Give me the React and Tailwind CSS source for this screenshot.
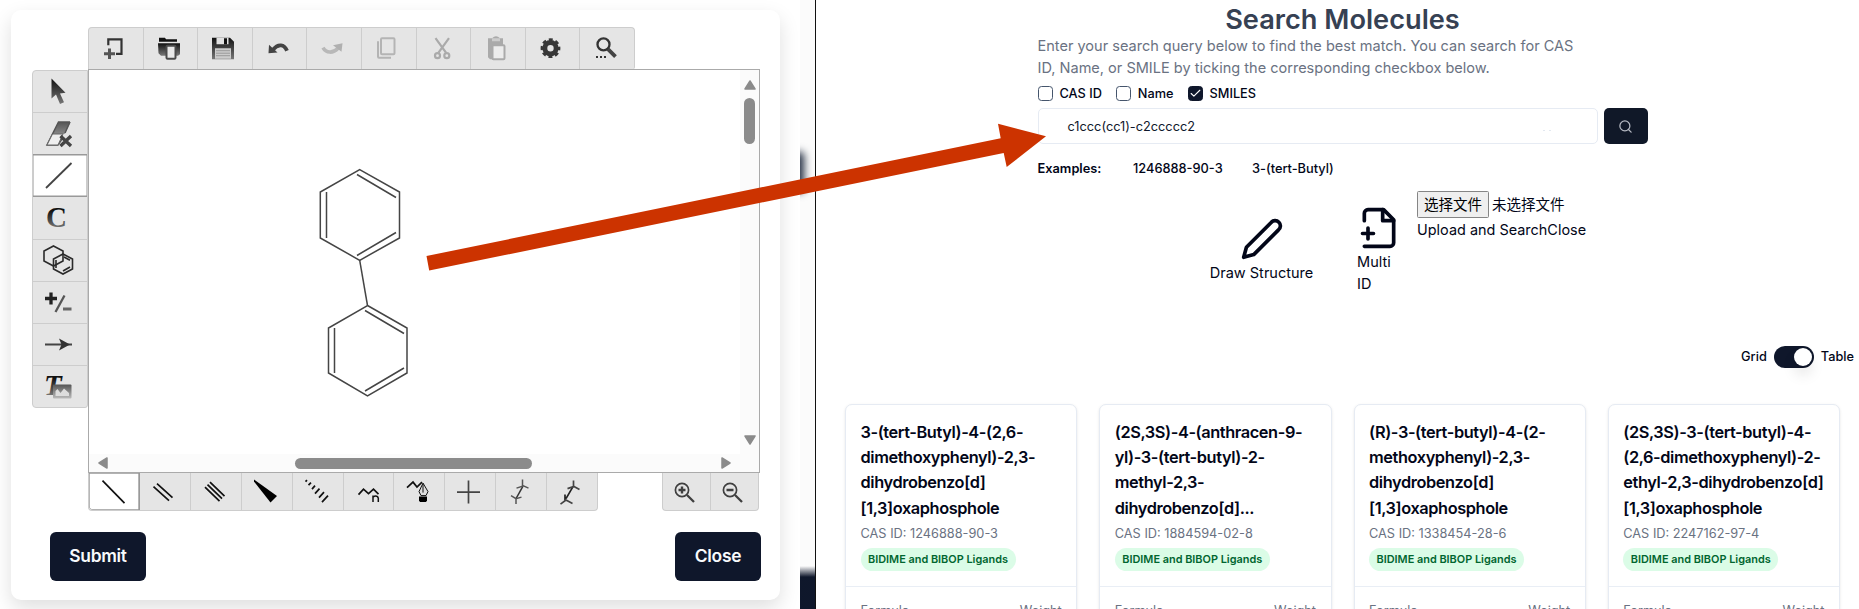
import React from "react";

const cards = [
  { lines: ["3-(tert-Butyl)-4-(2,6-", "dimethoxyphenyl)-2,3-", "dihydrobenzo[d]", "[1,3]oxaphosphole"], cas: "1246888-90-3" },
  { lines: ["(2S,3S)-4-(anthracen-9-", "yl)-3-(tert-butyl)-2-", "methyl-2,3-", "dihydrobenzo[d]..."], cas: "1884594-02-8" },
  { lines: ["(R)-3-(tert-butyl)-4-(2-", "methoxyphenyl)-2,3-", "dihydrobenzo[d]", "[1,3]oxaphosphole"], cas: "1338454-28-6" },
  { lines: ["(2S,3S)-3-(tert-butyl)-4-", "(2,6-dimethoxyphenyl)-2-", "ethyl-2,3-dihydrobenzo[d]", "[1,3]oxaphosphole"], cas: "2247162-97-4" },
];

const topIcons = [
  // new
  <g fill="none">
    <path d="M20.3 18V12.2H33.5V26.6H28" stroke="#333" strokeWidth="2.2" />
    <path d="M16 26.5H27M21.5 21.2V31.8" stroke="#555" strokeWidth="3" />
  </g>,
  // open
  <g>
    <path d="M16 10.5h6l1 1.5h11v2.5H16z" fill="#111" />
    <path d="M15 16h22v11l-2 1.5H18l-2.500-2.500z" fill="url(#dark)" />
    <rect x="23.500" y="18.500" width="9" height="13" rx="1" fill="#e8e8e8" stroke="#4a4a4a" strokeWidth="2" />
  </g>,
  // save
  <g>
    <path d="M15 10.500h18l4 4V32H15z" fill="url(#dark)" />
    <path d="M19.500 10.500h12v6.500h-12z" fill="#e2e2e2" />
    <path d="M27 11h3v6h-3z" fill="#111" />
    <path d="M18 21h16v10.500H18z" fill="#ccc" />
    <path d="M19 23.500h14M19 26h14M19 28.500h14" stroke="#999" />
  </g>,
  // undo
  <g>
    <path d="M21 22.500C26 16 32.500 17 35 23.500" fill="none" stroke="#444" strokeWidth="3.800" />
    <path d="M17 17.500L16.500 26l9-.8z" fill="#444" />
  </g>,
  // redo
  <g>
    <path d="M17 20.500C20 26 27 26.500 32 21" fill="none" stroke="#b8b8b8" strokeWidth="3.600" />
    <path d="M27 18l9.500-2-1 8.500z" fill="#b0b0b0" />
  </g>,
  // copy
  <g fill="none" stroke="#b4b4b4" strokeWidth="2">
    <rect x="20" y="11" width="13.500" height="16" rx="1" />
    <path d="M17 14v15.500q0 1 1 1h12" />
  </g>,
  // cut
  <g fill="none" stroke="#aaa" strokeWidth="2.200">
    <path d="M19.500 11L30 25.500M33 11L22.500 25.500" />
    <circle cx="21.500" cy="28.500" r="2.500" />
    <circle cx="30.800" cy="28.500" r="2.500" />
  </g>,
  // paste
  <g>
    <path d="M18 11h4q4-4 8 0h3v21H20l-2-2z" fill="#aaa" />
    <path d="M22 11h8v3h-8z" fill="#ccc" />
    <rect x="22.500" y="18" width="12" height="14" rx="1" fill="#ececec" stroke="#aaa" strokeWidth="2" />
  </g>,
  // settings
  <g>
    <circle cx="25.500" cy="21" r="5.700" fill="none" stroke="#383838" strokeWidth="5" />
    <circle cx="25.500" cy="21" r="8.600" fill="none" stroke="#383838" strokeWidth="2.600" strokeDasharray="3.900 2.854" strokeDashoffset="1.950" />
  </g>,
  // find
  <g fill="none" stroke="#333">
    <circle cx="24.500" cy="17.200" r="6" strokeWidth="2.300" />
    <path d="M29 22l7.500 7.500" stroke="#444" strokeWidth="3.800" />
    <path d="M17 29.800h10" strokeWidth="2" strokeDasharray="2 2" />
  </g>,
];

const leftIcons = [
  <path d="M19.500 8.500V28.500l4.500-4 4 9.500 4-1.800-4-8.700 5.500-.8z" fill="url(#dark)" />,
  <g>
    <path d="M26.500 10h12l-6 12H20.500z" fill="url(#eraser)" />
    <path d="M38 10H26.500L15 33h11l4-6M38 10l-5 11" fill="none" stroke="#555" strokeWidth="1.500" />
    <path d="M20.500 22L15 33h11l5-11z" fill="#efefef" stroke="#666" />
    <path d="M28.500 24l10.500 10M39 24L28.500 34" stroke="#444" strokeWidth="3.300" />
  </g>,
  <path d="M14 34L39.500 9" stroke="#444" strokeWidth="1.800" />,
  <text x="14" y="31" fontFamily="Liberation Serif, serif" fontSize="29" fontWeight="700" fill="url(#letter)">C</text>,
  <g fill="none" stroke="#2a2a2a" strokeWidth="1.600">
    <path d="M21.500 7l9.500 5v10l-9.500 5-9.500-5V12z" />
    <path d="M31 15l9.500 5v10L31 35l-9.500-5V20z" />
    <path d="M24 21v8M32 18l6 3.300M31 32l7-4" />
  </g>,
  <g fill="none">
    <path d="M13 17.500h12M19 11.500v12" stroke="#222" strokeWidth="3.300" />
    <path d="M23.500 31L32.500 14.500" stroke="#555" strokeWidth="2.300" />
    <path d="M31 28h8.500" stroke="#666" strokeWidth="3.200" />
  </g>,
  <g>
    <path d="M13 21.500h27" stroke="#444" strokeWidth="1.800" />
    <path d="M27 15.500l11 6-11 6 2.500-6z" fill="#333" />
  </g>,
  <g>
    <text x="12" y="29.500" fontFamily="Liberation Serif, serif" fontSize="29" fontStyle="italic" fontWeight="700" fill="url(#letter)">T</text>
    <rect x="21" y="19.500" width="18.500" height="14" rx="1" fill="url(#photo)" />
    <path d="M23.500 31v-5l2-2 3 4 3.500-4.500 5 4.500v3z" fill="#ddd" />
  </g>,
];

const bondIcons = [
  <path d="M13.500 8l22 22.500" stroke="#111" strokeWidth="1.700" />,
  <path d="M13.500 14l15.500 14M17 11l15.500 14" stroke="#111" strokeWidth="1.700" />,
  <path d="M14 14.500l14.500 14M16.500 12l14.500 14M19 9.500l14.500 14" stroke="#111" strokeWidth="1.700" />,
  <path d="M12 7l23 16.500-6.500 6.500L12 9z" fill="#000" />,
  <path d="M12.500 9l1.500-1.500M15.500 12.500l2.500-2.500M19 16.500l3-3.500M22 21l4.500-5M26 25l5-5.500M29 29.500l6-6.500" stroke="#111" strokeWidth="1.700" />,
  <g fill="none" stroke="#111" strokeWidth="1.700">
    <path d="M14.500 22l5-5.500 5 4.500 5-4.500 5 5" />
    <path d="M29 29.500V23M29 24.500q2.500-2 4.500-.5l.8 1.500v4" strokeWidth="1.500" />
  </g>,
  <g>
    <path d="M13 15l6-5.500 4 5 5-5" fill="none" stroke="#111" strokeWidth="1.700" />
    <path d="M29 10.500l-4 8.500 2 4h5l2-4z" fill="#ddd" stroke="#111" />
    <path d="M29 11v9" stroke="#111" />
    <path d="M25 24h8v4l-1 1.500h-6L25 28z" fill="#000" />
  </g>,
  <path d="M12 19.500h23M23.500 8v23" stroke="#444" strokeWidth="1.700" />,
  <g fill="none" stroke="#555" strokeWidth="1.500">
    <path d="M20 26l7-12.500" stroke="#333" />
    <path d="M15 23l5 3 5.500-1.500M20 26v5.500M26.500 7v6.500l-6 2M27 13l5.500 2.500" />
  </g>,
  <g fill="none" stroke="#444" strokeWidth="1.700">
    <path d="M18 28v-6M19 26l7-12" stroke="#222" />
    <path d="M13.500 31.500l5.500-4 6.500 3.500M26.500 8v6l-6 2M27 14l5.500 3" />
  </g>,
];

function Icon({ w, h, dx = 0, dy = 0, children }) {
  return (
    <svg width={w} height={h} viewBox={`${dx} ${dy} ${w} ${h}`} className="block shrink-0">
      {children}
    </svg>
  );
}

function Editor() {
  return (
    <div className="flex h-[590px] w-[769px] flex-col rounded-[10px] bg-white pt-[17px] pl-[21px] shadow-[0_8px_20px_rgba(0,0,0,0.13)]">
      <div className="ml-14 flex h-[42px] w-[547px] overflow-hidden rounded-t-[4px] rounded-br-[2px] border border-b-0 border-[#cdcdcd] bg-[#e5e5e5]">
        {topIcons.map((icon, i) => (
          <div key={i} className={"flex-1 overflow-hidden " + (i ? "border-l border-[#cdcdcd]" : "")}>
            <Icon w={54} h={43} dx={1} dy={0.8}>{icon}</Icon>
          </div>
        ))}
      </div>
      <div className="flex h-[404px]">
        <div className="mt-px flex h-[338px] w-14 flex-col overflow-hidden rounded-l-[4px] rounded-br-[3px] border border-[#cdcdcd] bg-[#e5e5e5]">
          {leftIcons.map((icon, i) => (
            <div
              key={i}
              className={
                "flex-1 overflow-hidden " +
                (i === 2 ? "border-t border-[#999] bg-white shadow-[inset_0_0_0_0.5px_#999]" : i === 0 ? "" : i === 3 ? "border-t border-[#999]" : "border-t border-[#cdcdcd]")
              }
            >
              <Icon w={54} h={42} dx={1} dy={1}>{icon}</Icon>
            </div>
          ))}
        </div>
        <div className="flex w-[672px] flex-col border border-[#aaa] bg-white">
          <div className="flex flex-1">
            <svg width="651" height="383" viewBox="89 70 651 383" fill="none" stroke="#454545" strokeWidth="1.500">
              <path d="M359.700 169.700L399.500 192V238L359.700 260.300L320.300 238V192Z" />
              <path d="M326.500 192V238M357 174.500L396 197.500M357 255.500L396 232.500" />
              <path d="M359.700 260.300L367.500 305.500" />
              <path d="M367.500 305.500L407 328V373L367.500 396L328.500 373V328Z" />
              <path d="M334.500 328V373M365 310.500L404 333.500M365 391L404 368" />
            </svg>
            <div className="flex flex-1 flex-col items-center bg-[#fbfbfb] pt-[10px] pb-[9px]">
              <svg width="12" height="10" viewBox="0 0 12 10"><path d="M6 1L11 9H1Z" fill="#8b8b8b" stroke="#8b8b8b" strokeWidth="1.500" strokeLinejoin="round" /></svg>
              <div className="mt-2 h-[46px] w-[11px] rounded-full bg-[#8b8b8b]" />
              <svg className="mt-auto" width="12" height="10" viewBox="0 0 12 10"><path d="M6 9L11 1H1Z" fill="#8b8b8b" stroke="#8b8b8b" strokeWidth="1.500" strokeLinejoin="round" /></svg>
            </div>
          </div>
          <div className="flex h-[18px] items-center bg-[#fbfbfb] pl-[9px]">
            <svg width="10" height="12" viewBox="0 0 10 12"><path d="M1 6L9 1V11Z" fill="#8b8b8b" stroke="#8b8b8b" strokeWidth="1.500" strokeLinejoin="round" /></svg>
            <div className="ml-[187px] h-[11px] w-[237px] rounded-full bg-[#8b8b8b]" />
            <svg className="ml-[189px]" width="10" height="12" viewBox="0 0 10 12"><path d="M9 6L1 1V11Z" fill="#8b8b8b" stroke="#8b8b8b" strokeWidth="1.500" strokeLinejoin="round" /></svg>
          </div>
        </div>
      </div>
      <div className="ml-14 flex h-[38px] w-[671px] justify-between">
        <div className="flex w-[510px] overflow-hidden rounded-b-[4px] border border-t-0 border-[#cdcdcd] bg-[#e5e5e5]">
          {bondIcons.map((icon, i) => (
            <div
              key={i}
              className={"flex-1 overflow-hidden " + (i === 0 ? "rounded-bl-[4px] bg-white shadow-[inset_0_0_0_0.7px_#999]" : i === 1 ? "border-l border-[#999]" : "border-l border-[#cdcdcd]")}
            >
              <Icon w={50} h={38} dy={0.4}>{icon}</Icon>
            </div>
          ))}
        </div>
        <div className="flex w-[97px] overflow-hidden rounded-b-[4px] border border-t-0 border-[#cdcdcd] bg-[#e5e5e5]">
          {[true, false].map((plus) => (
            <div key={String(plus)} className={"flex-1 overflow-hidden " + (plus ? "" : "border-l border-[#cdcdcd]")}>
              <Icon w={47} h={38}>
                <g fill="none" stroke="#3f3f3f">
                  <circle cx="19" cy="17" r="6.600" strokeWidth="1.700" />
                  <path d="M24 22l7 7" strokeWidth="2.300" />
                  <path d={plus ? "M15.500 17h7M19 13.500v7" : "M15.500 17h7"} strokeWidth="2.400" />
                </g>
              </Icon>
            </div>
          ))}
        </div>
      </div>
      <div className="mt-[21px] ml-[18px] flex w-[711px] justify-between text-[17.400px] font-semibold text-slate-50">
        <button className="h-[49px] w-[96px] rounded-[6px] bg-slate-900 tracking-[-0.3px]">Submit</button>
        <button className="h-[49px] w-[86px] rounded-[6px] bg-slate-900 tracking-[-0.3px]">Close</button>
      </div>
    </div>
  );
}

function Check({ label, on }) {
  return (
    <label className="flex items-center gap-[7px]">
      <span className={"flex size-[15px] items-center justify-center rounded-[3.500px] border " + (on ? "border-slate-900 bg-slate-900" : "border-slate-600")}>
        {on && (
          <svg width="13" height="13" viewBox="0 0 24 24" fill="none" stroke="#fff" strokeWidth="2" strokeLinecap="round" strokeLinejoin="round"><path d="M20 6L9 17l-5-5" /></svg>
        )}
      </span>
      <span className="translate-y-[0.5px]">{label}</span>
    </label>
  );
}

function Card({ lines, cas }) {
  return (
    <div className="h-[240px] rounded-[7px] border border-[#e6ebf3] bg-white shadow-[0_1px_3px_rgba(0,0,0,0.1)]">
      <div className="h-[181.500px] border-b-[1.500px] border-[#e9eef5] pt-[14.500px] pl-[14.500px]">
        <h3 className="text-[16.350px] leading-[25.450px] font-semibold tracking-[-0.025em] text-slate-950">
          {lines.map((l) => (
            <div key={l} className="whitespace-nowrap">{l}</div>
          ))}
        </h3>
        <p className="mt-[3px] text-[12.750px] leading-[20px] text-gray-500">CAS ID: {cas}</p>
        <span className="mt-[3.500px] flex h-[23px] w-[155px] items-center justify-center rounded-full bg-green-100 text-[10.900px] font-semibold whitespace-nowrap text-green-800">
          BIDIME and BIBOP Ligands
        </span>
      </div>
      <div className="flex justify-between px-[14.500px] pt-[15px] text-[12.750px] leading-[18px] text-gray-500">
        <span>Formula</span>
        <span>Weight</span>
      </div>
    </div>
  );
}

function Search() {
  return (
    <div className="flex min-w-0 flex-1 flex-col bg-white text-slate-950">
      <div className="ml-[221.500px] flex w-[610px] shrink-0 flex-col pt-[3px]">
        <h1 className="h-[32px] text-center text-[27.200px] leading-[33px] font-semibold text-gray-700">Search Molecules</h1>
        <p className="text-[14.540px] leading-[22px] whitespace-nowrap text-gray-500">
          Enter your search query below to find the best match. You can search for CAS<br />
          ID, Name, or SMILE by ticking the corresponding checkbox below.
        </p>
        <div className="mt-[5px] flex h-[18px] items-center gap-[14px] text-[12.750px] font-medium">
          <Check label="CAS ID" />
          <Check label="Name" />
          <Check label="SMILES" on />
        </div>
        <div className="mt-[6px] flex h-[36px] gap-[6px]">
          <div className="flex w-[560px] items-center justify-between rounded-[5px] border border-[#e6ebf3] pt-px pr-[46px] pl-[29px] text-[12.750px] text-slate-900">
            c1ccc(cc1)-c2ccccc2
            <span className="mt-2 flex gap-1"><i className="h-px w-0.5 bg-slate-200" /><i className="h-px w-0.5 bg-slate-200" /></span>
          </div>
          <button className="flex w-[44px] items-center justify-center rounded-[5px] bg-gray-900">
            <svg width="15" height="15" viewBox="0 0 24 24" fill="none" stroke="#b6bac3" strokeWidth="2" strokeLinecap="round"><circle cx="11" cy="11" r="8" /><path d="M21 21l-4.300-4.300" /></svg>
          </button>
        </div>
        <div className="mt-[12px] flex h-[24px] items-center pt-px text-[12.800px] font-medium">
          <span className="w-[95.500px] font-semibold">Examples:</span>
          <span className="w-[119px]">1246888-90-3</span>
          <span>3-(tert-Butyl)</span>
        </div>
      </div>
      <div className="ml-[393.500px] flex h-[166px] shrink-0 items-start text-[14.540px] leading-[22px]">
        <div className="mt-[37px] flex w-[104px] flex-col items-center whitespace-nowrap">
          <svg width="44" height="44" viewBox="0 0 24 24" fill="none" stroke="currentColor" strokeWidth="2" strokeLinecap="round" strokeLinejoin="round"><path d="M17 3a2.850 2.830 0 1 1 4 4L7.500 20.500 2 22l1.500-5.500Z" /></svg>
          <span className="mt-px">Draw Structure</span>
        </div>
        <div className="mt-[26px] ml-[43.500px] flex w-[45px] flex-col">
          <svg width="44" height="44" viewBox="0 0 24 24" fill="none" stroke="currentColor" strokeWidth="2" strokeLinecap="round" strokeLinejoin="round"><path d="M4 22h14a2 2 0 0 0 2-2V7.500L14.500 2H6a2 2 0 0 0-2 2v4" /><path d="M14 2v6h6M3 15h6M6 12v6" /></svg>
          <span className="mt-px">Multi</span>
          <span>ID</span>
        </div>
        <div className="mt-[11px] ml-[15px]">
          <div className="flex h-[27px] items-center gap-[3px] font-['Noto_Sans_CJK_SC',sans-serif]">
            <button className="h-[27px] w-[72px] rounded-[1.500px] border border-[#858585] bg-[#efefef] pb-px leading-[22px] whitespace-nowrap text-black">选择文件</button>
            <span className="-mt-0.5">未选择文件</span>
          </div>
          <div className="mt-px text-[14.450px]">Upload and SearchClose</div>
        </div>
      </div>
      <div className="mr-[5px] flex h-[22px] shrink-0 items-center justify-end gap-[7px] text-[12.750px] font-medium">
        Grid
        <span className="flex h-[22px] w-[40px] items-center justify-end rounded-full bg-slate-900 pr-[2px]">
          <i className="size-[18px] rounded-full bg-white shadow-[0_9px_14px_rgba(0,0,0,0.1)]" />
        </span>
        Table
      </div>
      <div className="mt-[36px] ml-[29px] grid w-[995px] shrink-0 grid-cols-4 gap-[22px]">
        {cards.map((c) => (
          <Card key={c.cas} {...c} />
        ))}
      </div>
    </div>
  );
}

export default function App() {
  return (
    <main className="relative flex h-[609px] w-[1859px] overflow-hidden bg-white font-['Inter',sans-serif]">
      <svg className="absolute" width="0" height="0">
        <defs>
          <linearGradient id="dark" x1="0" y1="0" x2="0" y2="1"><stop offset="0" stopColor="#111" /><stop offset="1" stopColor="#777" /></linearGradient>
          <linearGradient id="eraser" x1="0" y1="0" x2="0" y2="1"><stop offset="0" stopColor="#555" /><stop offset="1" stopColor="#888" /></linearGradient>
          <linearGradient id="letter" x1="0" y1="0" x2="0" y2="1"><stop offset="0.3" stopColor="#111" /><stop offset="0.85" stopColor="#777" /></linearGradient>
          <linearGradient id="photo" x1="0" y1="0" x2="0" y2="1"><stop offset="0" stopColor="#555" /><stop offset="1" stopColor="#bbb" /></linearGradient>
        </defs>
      </svg>
      <section className="h-[609px] w-[800px] shrink-0 overflow-hidden pt-[10px] pl-[11px]">
        <Editor />
      </section>
      <div className="flex h-[609px] w-[15px] shrink-0 flex-col overflow-hidden bg-[#fbfbfb]">
        <div className="mt-[152px] -ml-[9px] h-[40px] w-[13px] shrink-0 rounded-[4px] bg-slate-800 blur-[4px]" />
        <div className="mt-auto h-[43px] bg-gradient-to-b from-transparent to-slate-900 to-[11px]" />
      </div>
      <div className="w-px shrink-0 bg-[#111]" />
      <Search />
      <svg className="pointer-events-none absolute top-0 left-0" width="1060" height="290" viewBox="0 0 1060 290">
        <path d="M426.500 256L1000.700 138.300L998 123.700L1046 136.300L1006.700 167L1003.700 153L429.200 270.500Z" fill="#cc3300" />
      </svg>
    </main>
  );
}
